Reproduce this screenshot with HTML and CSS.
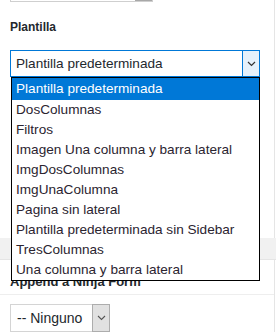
FILE: index.html
```html
<!DOCTYPE html>
<html lang="es">
<head>
    <meta charset="UTF-8">
    <title>Atributos de página</title>
    <link rel="stylesheet" href="styles.css">
</head>
<body>

    <div class="postbox">
        <div class="prev-select"><span class="prev-arrow"></span></div>

        <p class="field-label">Plantilla</p>

        <div class="select-wrap">
            <div class="select select-open">
                <span class="select-value">Plantilla predeterminada</span>
                <span class="select-arrow"><svg width="9" height="6" viewBox="0 0 9 6"><path d="M1 1 L4.5 4.5 L8 1" fill="none" stroke="#333" stroke-width="1.2"/></svg></span>
            </div>
            <ul class="dropdown">
                <li class="selected">Plantilla predeterminada</li>
                <li>DosColumnas</li>
                <li>Filtros</li>
                <li>Imagen Una columna y barra lateral</li>
                <li>ImgDosColumnas</li>
                <li>ImgUnaColumna</li>
                <li>Pagina sin lateral</li>
                <li>Plantilla predeterminada sin Sidebar</li>
                <li>TresColumnas</li>
                <li>Una columna y barra lateral</li>
            </ul>
        </div>
    </div>

    <div class="gap"></div>

    <div class="postbox">
        <div class="box-header">
            <h2>Append a Ninja Form</h2>
            <span class="toggle"></span>
        </div>
        <div class="box-body">
            <div class="select select-small">
                <span class="select-value">-- Ninguno</span>
                <span class="select-arrow"><svg width="9" height="6" viewBox="0 0 9 6"><path d="M1 1 L4.5 4.5 L8 1" fill="none" stroke="#555" stroke-width="1.1"/></svg></span>
            </div>
        </div>
    </div>

</body>
</html>
```

FILE: styles.css
```css
/* Caja de atributos de página */
body {
    margin: 0;
    background-color: #fff;
    font-family: "Liberation Sans", Arial, sans-serif;
    color: #23282d;
    overflow: hidden;
}
.postbox {
    width: 274px;
    border-right: 1px solid #e5e5e5;
    background-color: #fff;
}
.prev-select {
    position: relative;
    width: 141px;
    height: 1px;
    margin-left: 10px;
    border: 1px solid #cfcfcf;
    border-top: none;
}
.prev-arrow {
    position: absolute;
    right: 0;
    top: 0;
    width: 17px;
    height: 1px;
    background-color: #a8a8a8;
}
.field-label {
    margin: 0;
    padding: 17px 10px 0 10px;
    height: 31px;
    font-size: 12px;
    font-weight: bold;
    line-height: 16px;
}
.select-wrap {
    position: relative;
    margin-left: 10px;
    width: 250px;
    height: 27px;
    padding-bottom: 0;
}
.select {
    display: flex;
    align-items: stretch;
    box-sizing: border-box;
    height: 27px;
    border: 1px solid #0078d7;
    background-color: #fff;
    font-size: 13.6px;
}
.select-value {
    flex: 1;
    padding-left: 5px;
    line-height: 25px;
    white-space: nowrap;
}
.select-arrow {
    display: flex;
    align-items: center;
    justify-content: center;
    width: 16px;
    border-left: 1px solid #0078d7;
    background-color: #e5f1fb;
}
.dropdown {
    position: absolute;
    top: 27px;
    left: 1px;
    z-index: 2;
    box-sizing: border-box;
    width: 249px;
    margin: 0;
    padding: 0;
    list-style: none;
    border: 1px solid #000;
    background-color: #fff;
    font-size: 13.6px;
}
.dropdown li {
    height: 20px;
    line-height: 20px;
    padding-left: 4px;
    white-space: nowrap;
    color: #2b2430;
}
.dropdown li.selected {
    background-color: #0078d7;
    color: #fff;
    height: 22px;
    line-height: 22px;
}
.postbox:first-child {
    height: 238px;
}
.gap {
    height: 21px;
    background-color: #f1f1f1;
    border-bottom: 1px solid #e5e5e5;
}
.box-header {
    position: relative;
    height: 34px;
    border-bottom: 1px solid #eee;
}
.box-header h2 {
    margin: 0;
    padding: 0 10px;
    font-size: 13px;
    font-weight: bold;
    line-height: 44px;
}
.toggle {
    position: absolute;
    right: 16px;
    top: 18px;
    width: 3px;
    height: 2px;
    background-color: #72777c;
}
.box-body {
    padding: 9px 10px 0 10px;
    height: 40px;
}
.select-small {
    width: 100px;
    height: 28px;
    border: 1px solid #d4d4d4;
    font-size: 14px;
}
.select-small .select-value {
    padding-left: 6px;
    line-height: 26px;
}
.select-small .select-arrow {
    width: 16px;
    border: 1px solid #adadad;
    background-color: #e1e1e1;
    margin: -1px -1px -1px 0;
}
```
